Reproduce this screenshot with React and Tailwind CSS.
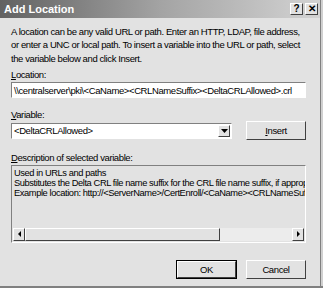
export default function App() {
  return (
    <div className="w-[323px] h-[288px] bg-[#e2e2e2] overflow-hidden relative text-black" style={{ fontFamily: '"Liberation Sans", Arial, sans-serif' }}>
      <div className="h-[18px] flex items-center justify-between pl-[4px] pr-[5px] bg-gradient-to-r from-[#626262] via-[#a4a4a4] to-[#d4d4d4]">
        <span className="text-white font-bold text-[11px] leading-none">Add Location</span>
        <div className="flex gap-[2px]">
          <div className="w-[13px] h-[12px] bg-[#e2e2e2] border border-t-white border-l-white border-r-[#404040] border-b-[#404040] flex items-center justify-center text-[10px] font-bold leading-none">?</div>
          <div className="w-[13px] h-[12px] bg-[#e2e2e2] border border-t-white border-l-white border-r-[#404040] border-b-[#404040] flex items-center justify-center text-[10px] font-bold leading-none">✕</div>
        </div>
      </div>
      <div className="pl-[11px] pr-[17px] pt-[7px] text-[9.5px] leading-[13.3px] tracking-[-0.4px]">
        <p>A location can be any valid URL or path. Enter an HTTP, LDAP, file address, or enter a UNC or local path. To insert a variable into the URL or path, select the variable below and click Insert.</p>
        <div className="mt-[3px]"><span className="underline">L</span>ocation:</div>
        <div className="mt-[1px] h-[16px] w-[295px] bg-white border border-t-[#808080] border-l-[#808080] border-r-white border-b-white px-[2px] flex items-center whitespace-nowrap overflow-hidden">\\centralserver\pki\&lt;CaName&gt;&lt;CRLNameSuffix&gt;&lt;DeltaCRLAllowed&gt;.crl</div>
        <div className="mt-[10px]"><span className="underline">V</span>ariable:</div>
        <div className="flex items-center justify-between">
          <div className="h-[16px] w-[221px] bg-white border border-t-[#808080] border-l-[#808080] border-r-white border-b-white flex items-center">
            <span className="flex-1 px-[2px] whitespace-nowrap">&lt;DeltaCRLAllowed&gt;</span>
            <div className="w-[12px] h-[12px] mr-[1px] bg-[#e2e2e2] border border-t-white border-l-white border-r-[#404040] border-b-[#404040] flex items-center justify-center">
              <svg width="7" height="4" viewBox="0 0 7 4"><path d="M0 0h7L3.5 4z" fill="#000" /></svg>
            </div>
          </div>
          <div className="h-[19px] w-[60px] border border-t-white border-l-white border-r-[#404040] border-b-[#404040] flex items-center justify-center"><span className="underline">I</span>nsert</div>
        </div>
        <div className="mt-[11px]"><span className="underline">D</span>escription of selected variable:</div>
        <div className="h-[78px] w-[295px] border border-t-[#808080] border-l-[#808080] border-r-white border-b-white flex flex-col">
          <div className="flex-1 px-[2px] pt-[2px] text-[9.3px] leading-[10.3px] tracking-[-0.4px] whitespace-nowrap overflow-hidden">
            <div>Used in URLs and paths</div>
            <div>Substitutes the Delta CRL file name suffix for the CRL file name suffix, if appropriate</div>
            <div>Example location: http://&lt;ServerName&gt;/CertEnroll/&lt;CaName&gt;&lt;CRLNameSuffix&gt;</div>
          </div>
          <div className="h-[13px] mx-[1px] mb-[1px] flex bg-[#ececec]">
            <div className="w-[12px] h-[13px] bg-[#e2e2e2] border border-t-white border-l-white border-r-[#404040] border-b-[#404040] flex items-center justify-center">
              <svg width="3" height="6" viewBox="0 0 3 6"><path d="M3 0v6L0 3z" fill="#000" /></svg>
            </div>
            <div className="w-[195px] h-[13px] bg-[#e2e2e2] border border-t-white border-l-white border-r-[#404040] border-b-[#404040]" />
            <div className="flex-1" />
            <div className="w-[12px] h-[13px] bg-[#e2e2e2] border border-t-white border-l-white border-r-[#404040] border-b-[#404040] flex items-center justify-center">
              <svg width="3" height="6" viewBox="0 0 3 6"><path d="M0 0v6l3-3z" fill="#000" /></svg>
            </div>
          </div>
        </div>
        <div className="mt-[17px] flex justify-end gap-[9px]">
          <div className="h-[19px] w-[61px] border border-black flex">
            <div className="flex-1 border border-t-white border-l-white border-r-[#404040] border-b-[#404040] flex items-center justify-center">OK</div>
          </div>
          <div className="h-[19px] w-[60px] border border-t-white border-l-white border-r-[#404040] border-b-[#404040] flex items-center justify-center">Cancel</div>
        </div>
      </div>
      <div className="absolute right-0 top-0 bottom-0 w-[3px] border-l border-[#808080] bg-[#d0d0d0]" />
      <div className="absolute left-0 right-0 bottom-0 h-[2px] bg-[#808080]" />
    </div>
  )
}
